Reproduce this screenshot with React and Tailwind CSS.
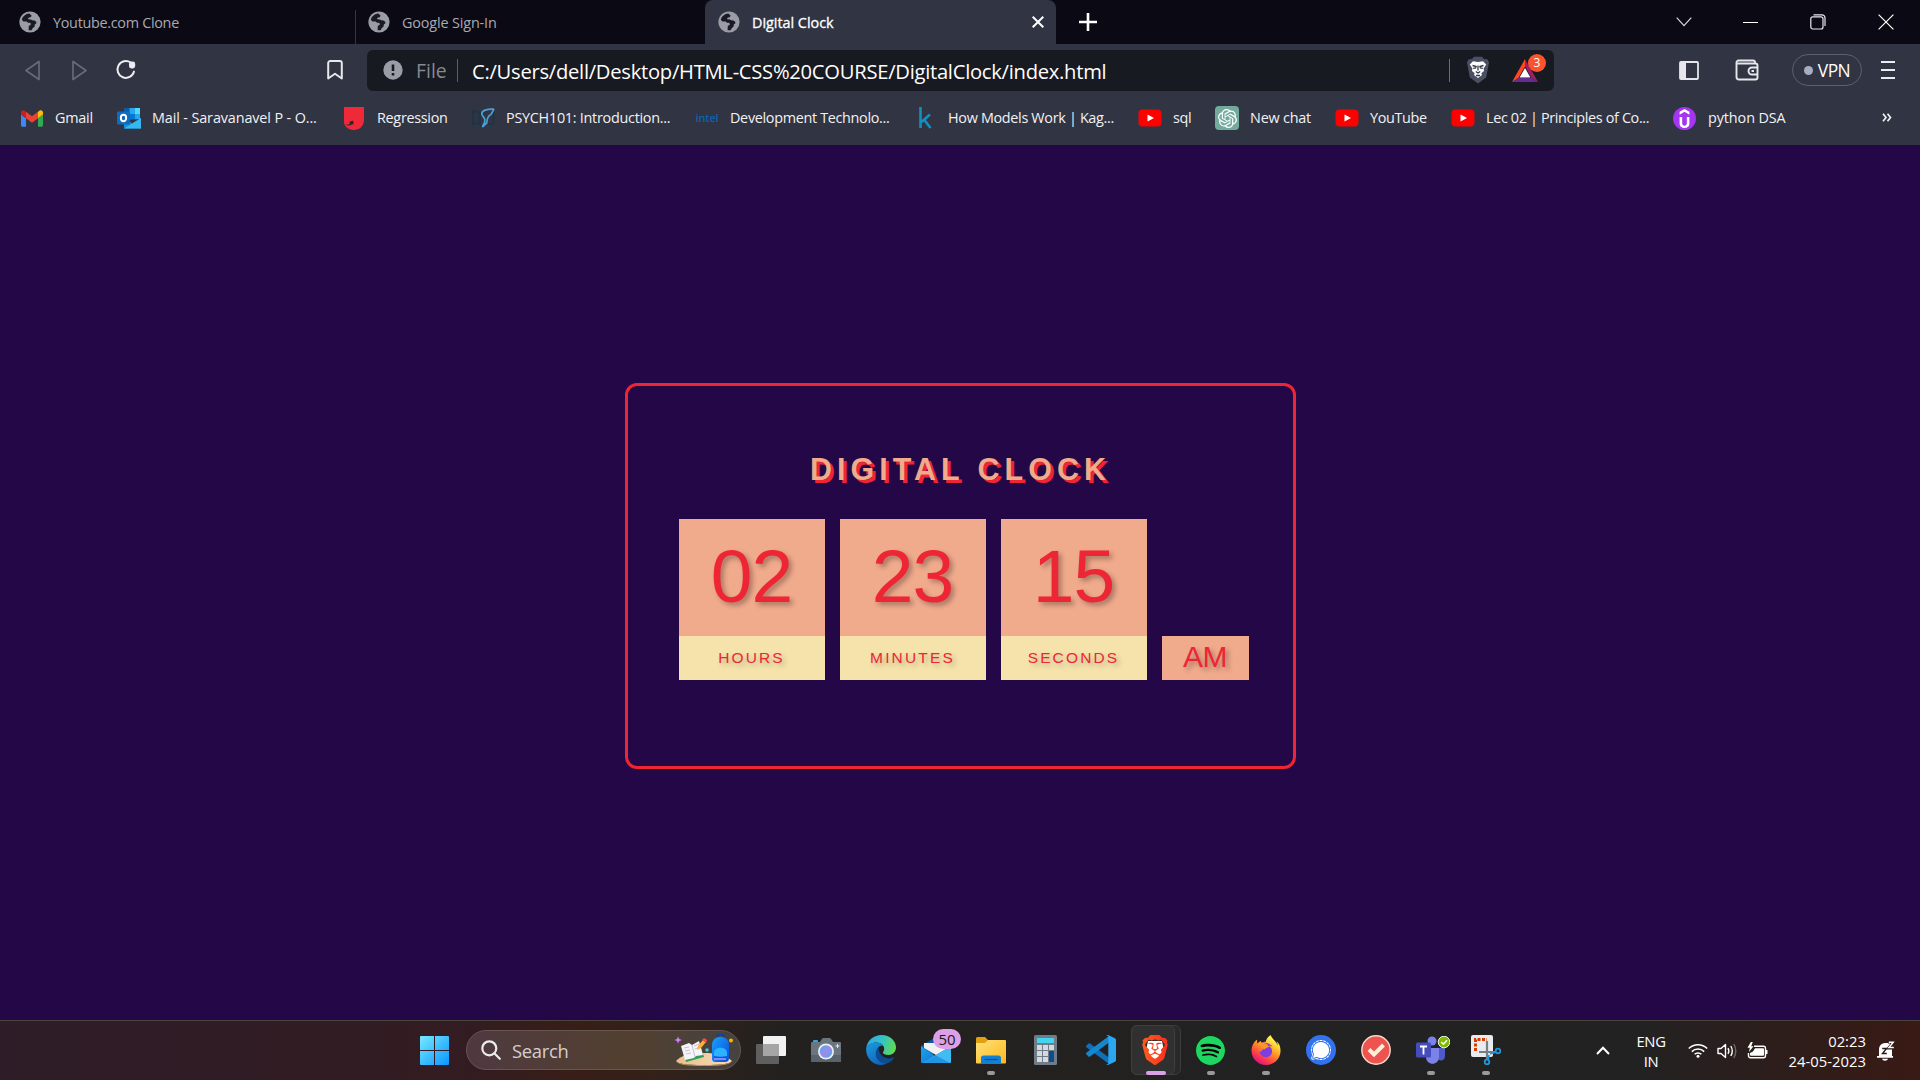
import { SiBrave, SiSpotify, SiFirefoxbrowser, SiSignal, SiUdemy, SiOpenai } from "react-icons/si";

/* ---------- browser chrome icons ---------- */

function Globe() {
  return (
    <svg viewBox="0 0 22 22" className="size-[22px] shrink-0">
      <circle cx="11" cy="11" r="10.6" fill="#9a9da8" />
      <path
        d="M10.3 2.6c-3.6.3-6.6 2.7-7.5 6.2l1.6 1.6 3.2.1 1.4 1.2h2.1l.8 1.2-.6 1.3-1.5.6-.2 4.4c.9.2 2.3.2 3.4-.1l.4-1.7 2.2-1.9.2-2.1 1.6-1.2-.2-1.5-1.7-1.2-2.4-.2-1.2-.9-2.5-.1-.4-1.1 1.2-.8 1.4-.2 1.1-1.4z"
        fill="#0c0b15"
        className="opacity-90"
      />
    </svg>
  );
}

function Reload() {
  return (
    <svg viewBox="0 0 22 22" className="size-[22px]" fill="none">
      <path d="M15.7 3.6A8.4 8.4 0 1 0 19 12.6" stroke="#ececf0" strokeWidth="2" strokeLinecap="round" />
      <rect x="14" y="2.6" width="6.2" height="6.8" rx="2.4" fill="#ececf0" />
    </svg>
  );
}

function BatTriangle() {
  return (
    <svg viewBox="0 0 26 23" className="h-[23px] w-[26px]">
      <path d="M13 0 0 23l6.500-4L13 7.500z" fill="#ff4724" />
      <path d="M13 0 26 23l-6.500-4L13 7.500z" fill="#9e1f63" />
      <path d="M0 23h26l-6.500-4h-13z" fill="#662d91" />
      <path d="M13 9 7.600 18.500h10.800z" fill="#fff" />
    </svg>
  );
}

function BraveShield() {
  return (
    <svg viewBox="0 0 24 28" className="h-[28px] w-6">
      <path d="M6 3 8 .8h8L18 3l3.300.2 1.700 3-.8 4.300-2 11L12 27.500 3.800 21.500l-2-11L1 6.200l1.700-3z" fill="#4b4f63" />
      <path
        d="M7 5.200 12 6l5-.8 3.200 3.200-2.600 4 .4 2.600-2.700 2.200L16 19l-4 3-4-3 .7-1.800L6 15l.4-2.600-2.600-4z"
        fill="#fff"
      />
      <path
        d="M6.500 9.500l3.600 1-.5 1.500-2.400.4M17.500 9.500l-3.600 1 .5 1.500 2.400.4M12 9.500v5M9.800 15.500l2.200 1.500 2.200-1.500M10 19.500h4"
        stroke="#33364a"
        strokeWidth="1.300"
        fill="none"
      />
    </svg>
  );
}

function Wallet() {
  return (
    <svg viewBox="0 0 24 22" className="h-[22px] w-6" fill="none" stroke="#e6e6ec" strokeWidth="1.900">
      <path d="M22.500 8V6.500a2 2 0 0 0-2-2H2.500M20 4.500V3.200A1.700 1.700 0 0 0 18.300 1.500H3.500A2 2 0 0 0 1.500 3.500V18a2.500 2.500 0 0 0 2.500 2.500h16.500a2 2 0 0 0 2-2V8" />
      <path d="M22.500 8.500H17a3.400 3.400 0 0 0 0 7h5.500M16.500 12h2.500" />
    </svg>
  );
}

/* ---------- bookmark icons ---------- */

function Gmail() {
  return (
    <svg viewBox="52 42 88 66" className="h-[17px] w-[22px]">
      <path fill="#4285f4" d="M58 108h14V74L52 59v43c0 3.320 2.690 6 6 6" />
      <path fill="#34a853" d="M120 108h14c3.320 0 6-2.690 6-6V59l-20 15" />
      <path fill="#fbbc04" d="M120 48v26l20-15v-8c0-7.420-8.470-11.650-14.400-7.200" />
      <path fill="#ea4335" d="M72 74V48l24 18 24-18v26L96 92" />
      <path fill="#c5221f" d="M52 51v8l20 15V48l-5.600-4.200c-5.940-4.450-14.400-.22-14.400 7.200" />
    </svg>
  );
}

function Outlook() {
  return (
    <svg viewBox="0 0 24 22" className="h-[22px] w-6">
      <path d="M7 1h16v12H7z" fill="#0a5ba8" />
      <path d="M12.500 1H18v6h-5.500z" fill="#28a8ea" />
      <path d="M18 1h5v6h-5z" fill="#50d9ff" />
      <path d="M12.500 7H18v5h-5.500z" fill="#0078d4" />
      <path d="M18 7h5v5h-5z" fill="#28a8ea" />
      <path d="M7 21.500V11l8.500 5.500L24 11v10.500z" fill="#1490df" />
      <path d="M7 21.500 24 11v10.500z" fill="#35b8f1" />
      <rect y="4.500" width="13" height="13" rx="1" fill="#0f6cbd" />
      <ellipse cx="6.500" cy="11" rx="2.700" ry="3.200" fill="none" stroke="#fff" strokeWidth="1.900" />
    </svg>
  );
}

function RegressionMark() {
  return (
    <svg viewBox="0 0 20 23" className="h-[23px] w-5">
      <path d="M0 0h20v13.500A9.500 9.500 0 0 1 10.500 23C5.500 23 1 20.500 0 16z" fill="#ef2938" />
      <path d="M1.500 17.500c3 .5 4.500-.4 5-1.800l-1.800-.6 4.500-1.300.3 4.200-1.200-.9c-1.400 1.500-4.800 1.900-6.800.4z" fill="#20222e" />
    </svg>
  );
}

function PsychMark() {
  return (
    <svg viewBox="0 0 23 20" className="h-5 w-[23px]" fill="none">
      <path d="M1.200 2.500v13.500l6-1 2 3M1.200 2.500l6.500 2v10M21.500 4v12h-5.500" stroke="#1d3447" strokeWidth="2" />
      <path d="M22 1.200C15 .8 9.500 2.500 9.800 6c.3 3 4.200 3.500 3 7.500-.6 2-1.500 3.500-2.500 5.500M22 1.200l-3 5.300c-3 1-4 5-4.300 8.500l-4.400 4" stroke="#4b9fd5" strokeWidth="1.700" />
    </svg>
  );
}

function YouTube() {
  return (
    <svg viewBox="0 0 24 18" className="h-[18px] w-6">
      <rect x=".5" y=".5" width="23" height="17" rx="4" fill="#f00" />
      <path d="m9.500 5.500 6.500 3.500-6.500 3.500z" fill="#fff" />
    </svg>
  );
}

function Kaggle() {
  return (
    <svg viewBox="0 0 14 22" className="h-[22px] w-3.5" fill="none" stroke="#158fc0" strokeWidth="2.600">
      <path d="M2.500 0v21M12 7.500 3.500 15M6 12.500l6.500 8.500" />
    </svg>
  );
}

function ChatGpt() {
  return (
    <span className="flex size-6 items-center justify-center rounded bg-[#74aa9c]">
      <SiOpenai className="size-[19px] text-white" />
    </span>
  );
}

function Udemy() {
  return (
    <span className="-ml-px flex size-[23px] items-center justify-center rounded-full bg-[#a435f0]">
      <SiUdemy className="size-[19px] text-white" />
    </span>
  );
}

/* ---------- taskbar icons ---------- */

function Start() {
  return (
    <svg viewBox="0 0 29 29" className="size-[29px]">
      <defs>
        <linearGradient id="start" x1="0" y1="0" x2="1" y2="1">
          <stop offset="0" stopColor="#75eaff" />
          <stop offset="1" stopColor="#0a95ff" />
        </linearGradient>
      </defs>
      <path d="M1 0h13v14H0V1a1 1 0 0 1 1-1zM15 0h13a1 1 0 0 1 1 1v13H15zM0 15h14v14H1a1 1 0 0 1-1-1zM15 15h14v13a1 1 0 0 1-1 1H15z" fill="url(#start)" />
    </svg>
  );
}

function StudyArt() {
  return (
    <svg viewBox="0 0 60 32" className="h-8 w-[60px]">
      <defs>
        <linearGradient id="bag" x1="0" y1="0" x2="1" y2="1">
          <stop offset="0" stopColor="#1aa0ff" />
          <stop offset="1" stopColor="#0a4fd6" />
        </linearGradient>
        <linearGradient id="sand" x1="0" y1="0" x2="1" y2="0">
          <stop offset="0" stopColor="#eabf8d" />
          <stop offset="1" stopColor="#f5dcb9" />
        </linearGradient>
      </defs>
      <path d="M2 27c5-6 16-8 28-8s22 2 28 8c-3 3-10 4-28 4S5 30 2 27z" fill="url(#sand)" />
      <path d="M2 27c3 3 10 4 28 4s25-1 28-4c-1 3-8 5-28 5S3 30 2 27z" fill="#c78f58" />
      <path d="m8 14 4 14 18-5-4-13z" fill="#2f9e58" />
      <path d="m7 12 8-3 3 2 7-4 4 14-7 1-2 2-9 2z" fill="#f6f4f8" />
      <path d="m18 11 3 12M10 14l5-1M11 17l5-1M12 20l5-1M20 12l5-2M21 15l5-2" stroke="#b9b4c8" strokeWidth=".8" />
      <path d="m23 16 1-4 5-6 3 2-5 6z" fill="#ffb02e" />
      <path d="m28 6 2-2 3 2-1 3z" fill="#f4504a" />
      <path d="M4 2.500 5.300 5 8 6 5.300 7 4 9.500 3 7 .3 6 3 5z" fill="#d57bff" />
      <circle cx="33" cy="16" r="1.800" fill="#3fd0d4" />
      <circle cx="57" cy="6.500" r="2" fill="#ffb100" />
      <path d="M43 4c0-5 7-5 7 0" stroke="#0a3fae" strokeWidth="1.600" fill="none" />
      <path d="M38 11c0-11 17-11 17 0v13c0 3-2 4-4 4h-9c-3 0-4-1-4-4z" fill="url(#bag)" />
      <path d="M40 19c0-7 13-7 13 0v5H40z" fill="#2bb3ff" />
      <path d="M40 22c4 1 9 1 13 0v4H40z" fill="#0c57e0" />
      <path d="M40 25h12" stroke="#c7a5ff" strokeWidth="1.300" />
    </svg>
  );
}

function TaskView() {
  return (
    <svg viewBox="0 0 30 28" className="h-7 w-[30px]">
      <rect x="7" width="23" height="20" rx="1" fill="#f2f2f2" />
      <rect y="8" width="23" height="20" rx="1" fill="#666" className="opacity-90" />
      <path d="M7 8h16v12H7z" fill="#a6a6a6" />
    </svg>
  );
}

function Camera() {
  return (
    <svg viewBox="0 0 30 24" className="h-6 w-[30px]">
      <rect x="2" y="2" width="5" height="4" rx="1" fill="#2ba5e8" />
      <path d="M1 4h8l2-3.200 1-.8h7l1 .8L22 4h7a1 1 0 0 1 1 1v18a1 1 0 0 1-1 1H1a1 1 0 0 1-1-1V5a1 1 0 0 1 1-1z" fill="#6b757e" />
      <path d="M0 17h30v6a1 1 0 0 1-1 1H1a1 1 0 0 1-1-1z" fill="#59636c" />
      <circle cx="15" cy="13.500" r="8" fill="#eceff2" />
      <defs>
        <linearGradient id="lens" x1="0" y1="0" x2="1" y2="1">
          <stop offset=".1" stopColor="#5aa6f0" />
          <stop offset=".5" stopColor="#a08ae8" />
          <stop offset="1" stopColor="#3fb0f0" />
        </linearGradient>
      </defs>
      <circle cx="15" cy="13.500" r="6.300" fill="url(#lens)" />
      <path d="M26.500 6v4M24.500 8h4" stroke="#e5e8ea" strokeWidth="1" />
    </svg>
  );
}

function Edge() {
  return (
    <svg viewBox="0 0 30 30" className="size-[30px]">
      <defs>
        <linearGradient id="edge-top" x1="0" y1=".4" x2="1" y2=".6">
          <stop offset="0" stopColor="#2fa7e6" />
          <stop offset=".5" stopColor="#35c3c5" />
          <stop offset="1" stopColor="#62dc4b" />
        </linearGradient>
        <linearGradient id="edge-left" x1="0" y1="0" x2=".6" y2="1">
          <stop offset="0" stopColor="#1b9de2" />
          <stop offset="1" stopColor="#0f62b8" />
        </linearGradient>
      </defs>
      <path d="M.2 13C1.500 5 8 0 15.500 0 24 0 30 6 30 12.500c0 4.500-3.500 7.500-7.500 7.500-3.500 0-5.500-1.200-5.500-2.500 0-1 1.200-1.500 1.200-3.800C18.200 10.500 15 7.500 10.500 7.500 5.500 7.500 1.500 10 .2 13z" fill="url(#edge-top)" />
      <path d="M.2 13C1.800 9.500 6 7.500 10.500 7.500c3 0 5.200 1.200 6.600 3-4 0-6.600 2.800-6.600 7 0 6.500 5.500 11.500 11.500 9.500-2 1.900-4.500 3-7 3C6.500 30-.8 22 .2 13z" fill="url(#edge-left)" />
      <path d="M12.500 12.600C7.500 17 9.500 26 17 28.300c5 1.200 9.500-2.300 10.800-5.300.3-.8-.3-1-1-.6-6 2.800-13.800-.4-14.300-9.800z" fill="#0c4c92" />
    </svg>
  );
}

function Mail() {
  return (
    <svg viewBox="0 0 30 26" className="h-[26px] w-[30px]">
      <defs>
        <linearGradient id="mail" x1="0" y1="0" x2="1" y2="1">
          <stop offset="0" stopColor="#1aa4ea" />
          <stop offset="1" stopColor="#1272d2" />
        </linearGradient>
      </defs>
      <path d="M0 9 13 1a3 3 0 0 1 4 0l13 8v8H0z" fill="#0c57a5" />
      <path d="M3 6h24v5L15 18 3 11z" fill="#f1f1f4" />
      <path d="M0 9l20 14v3H1a1 1 0 0 1-1-1z" fill="url(#mail)" />
      <path d="M30 9v16a1 1 0 0 1-1 1H1.500z" fill="#3fbdf3" />
      <path d="M1.500 26 15 18.500 29 26z" fill="#1583db" className="opacity-70" />
    </svg>
  );
}

function Explorer() {
  return (
    <svg viewBox="0 0 30 27" className="h-[27px] w-[30px]">
      <defs>
        <linearGradient id="folder" x1="0" y1="0" x2="1" y2="1">
          <stop offset="0" stopColor="#ffe07a" />
          <stop offset="1" stopColor="#fcb91a" />
        </linearGradient>
      </defs>
      <path d="M0 1.500A1.500 1.500 0 0 1 1.500 0H9l3 3h7v6H0z" fill="#e0a010" />
      <path d="M0 6h9l3-3h17a1 1 0 0 1 1 1v21.500a1 1 0 0 1-1 1H1a1 1 0 0 1-1-1z" fill="url(#folder)" />
      <path d="M5 27v-6a2.500 2.500 0 0 1 2.500-2.500h15A2.500 2.500 0 0 1 25 21v6z" fill="#1180d4" />
      <path d="M8.500 22.500h13" stroke="#0a4e92" strokeWidth="1.200" />
    </svg>
  );
}

function Calculator() {
  return (
    <svg viewBox="0 0 23 30" className="h-[30px] w-[23px]">
      <rect width="23" height="30" rx="1.500" fill="#717c86" />
      <rect x="3" y="3" width="17" height="5" rx=".5" fill="#42d4f0" />
      <path d="M3 10h5v5H3zM9 10h5v5H9zM15 10h5v5h-5zM3 16h5v5H3zM9 16h5v5H9zM3 22h5v5H3zM9 22h5v5H9z" fill="#d3dadf" />
      <path d="M15 16h5v11h-5z" fill="#0c4c92" />
    </svg>
  );
}

function VsCode() {
  return (
    <svg viewBox="0 0 30 30" className="size-[30px]">
      <path d="M.6 10.500 2.300 8.600a1.300 1.300 0 0 1 1.700 0L23 22.500V29L.6 12.400a1.200 1.200 0 0 1 0-1.900z" fill="#0f6fb8" />
      <path d="M.6 19.500 2.300 21.400a1.300 1.300 0 0 0 1.700 0L23 7.500V1L.6 17.600a1.200 1.200 0 0 0 0 1.900z" fill="#1687cf" />
      <path d="m22 0 7 3.200a2 2 0 0 1 1 1.600v20.400a2 2 0 0 1-1 1.600L22 30c-.8 0-1.500-.4-2-1 1 .6 2.300.1 2.300-1.300V2.300C22.300.9 21 .4 20 1c.5-.6 1.200-1 2-1z" fill="#2ba6ef" />
    </svg>
  );
}

function BraveLion() {
  return (
    <svg viewBox="0 0 30 30" className="size-[30px]">
      <defs>
        <linearGradient id="brave" x1="0" y1="0" x2="1" y2="0">
          <stop offset="0" stopColor="#ff5b1f" />
          <stop offset="1" stopColor="#f8301c" />
        </linearGradient>
      </defs>
      <path d="M8 6h14l2 10-9 10-9-10z" fill="#fff" />
      <SiBrave x="0" y="0" size={30} fill="url(#brave)" />
    </svg>
  );
}

function Spotify() {
  return (
    <span className="flex size-[29px] rounded-full bg-black">
      <SiSpotify className="size-[29px] text-[#1ed760]" />
    </span>
  );
}

function Firefox() {
  return (
    <svg viewBox="0 0 30 30" className="size-[30px]">
      <defs>
        <linearGradient id="fox" gradientUnits="userSpaceOnUse" x1="19" y1="2" x2="6" y2="22">
          <stop offset=".1" stopColor="#fff04a" />
          <stop offset=".45" stopColor="#ff9a26" />
          <stop offset=".8" stopColor="#ff3b47" />
          <stop offset="1" stopColor="#e31587" />
        </linearGradient>
      </defs>
      <circle cx="14.500" cy="15.500" r="9" fill="#7d3fe0" />
      <path d="M7 8c3-2 6 0 9 1l2 3-6 2-3 3z" fill="#ff9420" />
      <SiFirefoxbrowser x="0" y="0" size={30} fill="url(#fox)" />
    </svg>
  );
}

function Signal() {
  return (
    <span className="flex size-[30px] items-center justify-center rounded-full bg-[#3372ee]">
      <SiSignal className="size-5 text-white" />
    </span>
  );
}

function Todo() {
  return (
    <svg viewBox="0 0 30 30" className="size-[30px]">
      <circle cx="15" cy="15" r="14.200" fill="#ef5350" stroke="#f6dccb" strokeWidth="1.400" />
      <path d="m8 14.500 5 5 9.500-9.500" stroke="#fff0da" strokeWidth="4" fill="none" />
    </svg>
  );
}

function Teams() {
  return (
    <svg viewBox="0 0 34 28" className="ml-1 h-7 w-[34px]">
      <circle cx="16" cy="5" r="4.500" fill="#7b83eb" />
      <path d="M21 12h8v8c0 6-8 6-8 0z" fill="#5059c9" />
      <path d="M10 12h13v9c0 9-13 9-13 0z" fill="#7b83eb" />
      <rect y="6.500" width="15" height="15" rx="1.500" fill="#444dbb" />
      <path d="M4 10.500h7M7.500 10.500v8" stroke="#fff" strokeWidth="1.800" />
      <circle cx="28" cy="6" r="5.800" fill="#7fba00" stroke="#f3f8e8" strokeWidth="1" />
      <path d="m25.200 6 2.200 2.200 3.600-4" stroke="#fff" strokeWidth="1.500" fill="none" />
    </svg>
  );
}

function Snip() {
  return (
    <svg viewBox="0 0 30 30" className="size-[30px]">
      <rect width="22" height="22" rx="2" fill="#e8ecef" />
      <path d="M4.500 16V4.500H16" stroke="#d83b01" strokeWidth="3" strokeDasharray="3 1.500" fill="none" />
      <path d="M16 6v18M8 17h17" stroke="#767f88" strokeWidth="2.200" />
      <circle cx="27" cy="16" r="2.300" fill="none" stroke="#1c9be0" strokeWidth="1.800" />
      <circle cx="16" cy="27" r="2.300" fill="none" stroke="#1c9be0" strokeWidth="1.800" />
      <path d="m19 19 6-2M18 20l-1 5" stroke="#1c9be0" strokeWidth="1.800" />
    </svg>
  );
}

/* ---------- sections ---------- */

const bookmarks = [
  { label: "Gmail", icon: <Gmail />, w: "w-[97px]", t: "tracking-[-0.25px]" },
  { label: "Mail - Saravanavel P - O...", icon: <Outlook />, w: "w-[225px]", t: "tracking-[-0.12px]" },
  { label: "Regression", icon: <RegressionMark />, w: "w-[129px]", t: "tracking-[-0.3px]" },
  { label: "PSYCH101: Introduction...", icon: <PsychMark />, w: "w-[224px]", t: "tracking-[-0.27px]" },
  {
    label: "Development Technolo...",
    icon: <span className="text-[11px] font-semibold tracking-[-0.2px] text-[#0b62b0]">intel</span>,
    w: "w-[218px]",
    t: "tracking-[-0.32px]",
  },
  { label: "How Models Work | Kag...", icon: <Kaggle />, w: "w-[225px]", t: "tracking-[-0.32px]" },
  { label: "sql", icon: <YouTube />, w: "w-[77px]", t: "tracking-[-0.3px]" },
  { label: "New chat", icon: <ChatGpt />, w: "w-[120px]", t: "tracking-[-0.2px]" },
  { label: "YouTube", icon: <YouTube />, w: "w-[116px]", t: "tracking-[-0.35px]" },
  { label: "Lec 02 | Principles of Co...", icon: <YouTube />, w: "w-[222px]", t: "tracking-[-0.35px]" },
  { label: "python DSA", icon: <Udemy />, w: "w-[203px]", t: "tracking-[-0.1px]" },
];

function TabStrip() {
  return (
    <div className="flex h-11 bg-[#0b0a14] text-[14.4px] tracking-[-0.3px] text-[#a9a9b2]">
      <div className="flex w-[355px] items-center gap-3 pl-[19px]">
        <Globe />
        <span className="pt-px">Youtube.com Clone</span>
      </div>
      <div className="mt-2.5 flex w-[350px] items-center gap-3 border-l border-[#34353f] pb-2.5 pl-3">
        <Globe />
        <span className="pt-px tracking-[-0.15px]">Google Sign-In</span>
      </div>
      <div className="flex w-[351px] items-center gap-3 rounded-t-lg bg-[#313442] pr-[12px] pl-[13px] text-white">
        <Globe />
        <span className="grow pt-px tracking-[-0.02px] [-webkit-text-stroke:0.3px_#fff]">Digital Clock</span>
        <svg viewBox="0 0 12 12" className="size-3" stroke="#fff" strokeWidth="2">
          <path d="M.7.7l10.600 10.600M11.300.7.7 11.300" />
        </svg>
      </div>
      <div className="flex grow items-center pl-[23px]">
        <svg viewBox="0 0 18 18" className="size-[18px]" stroke="#fff" strokeWidth="2.600">
          <path d="M9 0v18M0 9h18" />
        </svg>
      </div>
      <div className="flex items-center pr-[26px]">
        <svg viewBox="0 0 16 10" className="mr-[51px] h-2.5 w-4" fill="none" stroke="#d8d8dc" strokeWidth="1.200">
          <path d="m.7.7 7.300 8 7.300-8" />
        </svg>
        <div className="mr-[52px] h-px w-[15px] bg-white" />
        <svg viewBox="0 0 16 16" className="mr-[52px] size-4" fill="none" stroke="#e8e8ec" strokeWidth="1.200">
          <rect x=".8" y="2.800" width="12.200" height="12.200" rx="2" />
          <path d="M3.500.8H12a3 3 0 0 1 3 3V12" />
        </svg>
        <svg viewBox="0 0 16 16" className="size-4" stroke="#fff" strokeWidth="1.200">
          <path d="m.6.6 14.800 14.800M15.400.6.6 15.400" />
        </svg>
      </div>
    </div>
  );
}

function Toolbar() {
  return (
    <div className="flex h-[52px] items-center bg-[#313442] pl-6">
      <svg viewBox="0 0 16 21" className="mr-[31px] h-[21px] w-4" fill="none" stroke="#676a77" strokeWidth="1.700" strokeLinejoin="round">
        <path d="M15 1.500v18L2 10.500z" />
      </svg>
      <svg viewBox="0 0 16 21" className="mr-7 h-[21px] w-4" fill="none" stroke="#676a77" strokeWidth="1.700" strokeLinejoin="round">
        <path d="M2 1.500v18l13-9z" />
      </svg>
      <Reload />
      <svg viewBox="0 0 16 20" className="mr-6 ml-[190px] h-5 w-4" fill="none" stroke="#e8e8ec" strokeWidth="2" strokeLinejoin="round">
        <path d="M1.200 3a2 2 0 0 1 2-2h9.600a2 2 0 0 1 2 2v15.500L8 13.800l-6.800 4.700z" />
      </svg>
      <div className="flex h-[41px] w-[1187px] items-center rounded-md bg-[#181a21] pl-4">
        <svg viewBox="0 0 20 20" className="size-5">
          <circle cx="10" cy="10" r="9.700" fill="#9a9da8" />
          <path d="M10 4.500v6.500M10 13v2.500" stroke="#181a21" strokeWidth="2.600" />
        </svg>
        <span className="w-[41px] pt-0.5 pl-[13px] text-[19.4px] text-[#868892]">File</span>
        <div className="mr-3.5 ml-[13px] h-[23px] w-px bg-[#5d5f68]" />
        <span className="grow pt-0.5 text-[20.2px] tracking-[-0.27px] text-white">
          C:/Users/dell/Desktop/HTML-CSS%20COURSE/DigitalClock/index.html
        </span>
        <div className="mr-4 h-[23px] w-px bg-[#6b6d76]" />
        <BraveShield />
        <div className="relative mr-[16px] ml-[22px]">
          <BatTriangle />
          <span className="absolute -top-[5px] left-4 flex size-[18px] items-center justify-center rounded-full bg-[#fb542b] text-[12px] text-white">
            3
          </span>
        </div>
      </div>
      <svg viewBox="0 0 20 19" className="ml-[125px] h-[19px] w-5">
        <rect x="1" y="1" width="18" height="17" rx="1" fill="none" stroke="#e6e6ec" strokeWidth="1.800" />
        <path d="M1 1h6v17H1z" fill="#e6e6ec" />
      </svg>
      <div className="ml-9">
        <Wallet />
      </div>
      <div className="ml-[33px] flex h-8 w-[70px] items-center justify-center rounded-full border border-[#5c5f74] text-[17.4px] tracking-[-0.55px] text-white">
        <span className="mr-[5px] size-[9px] rounded-full bg-[#a9adc0]" />
        VPN
      </div>
      <div className="ml-[19px] flex w-3.5 flex-col gap-[6px]">
        <div className="h-0.5 bg-[#ececf0]" />
        <div className="h-0.5 bg-[#ececf0]" />
        <div className="h-0.5 bg-[#ececf0]" />
      </div>
    </div>
  );
}

function BookmarkBar() {
  return (
    <div className="flex h-[49px] bg-[#313442] pb-[5px] pl-5 text-[14.4px] whitespace-nowrap text-[#f1f1f4]">
      {bookmarks.map((b) => (
        <div key={b.label} className={"flex shrink-0 items-center gap-[11px] " + b.w}>
          <span className="flex w-6 shrink-0 items-center justify-center">{b.icon}</span>
          <span className={b.t}>{b.label}</span>
        </div>
      ))}
      <svg viewBox="0 0 10 9" className="mt-[17px] ml-1.5 h-[9px] w-2.5" fill="none" stroke="#f1f1f4" strokeWidth="1.700">
        <path d="m1 .8 3 3.700-3 3.700M5.500.8l3 3.700-3 3.700" />
      </svg>
    </div>
  );
}

const units = [
  { value: "02", label: "HOURS" },
  { value: "23", label: "MINUTES" },
  { value: "15", label: "SECONDS" },
];

function ClockPage() {
  return (
    <main className="flex flex-1 flex-col items-center bg-[#240747] pt-[238px] font-['Liberation_Sans',Arial,sans-serif]">
      <section className="flex h-[386px] w-[671px] flex-col rounded-xl border-[3px] border-[#ee2535]">
        <h2 className="mt-[66px] ml-[1px] text-center text-[30.5px] leading-[34px] font-bold tracking-[5px] text-[#f0aa8c] [text-shadow:3px_3px_0_#ee2535]">
          DIGITAL CLOCK
        </h2>
        <div className="mt-[33px] ml-[51px] flex items-end gap-[15px] text-[#ee2535]">
          {units.map((u) => (
            <div key={u.label} className="w-[146px] text-center">
              <div className="flex h-[117px] items-center justify-center bg-[#f0aa8c] pb-0.5 text-[75px] leading-none tracking-[-1px] [text-shadow:3px_3px_5px_rgba(0,0,0,0.3)]">
                {u.value}
              </div>
              <div className="flex h-11 items-center justify-center bg-[#f5e3ab] text-[15.5px] tracking-[2.15px] [text-shadow:3px_3px_5px_rgba(0,0,0,0.25)]">
                {u.label}
              </div>
            </div>
          ))}
          <div className="flex h-11 w-[87px] items-center justify-center bg-[#f0aa8c] pb-0.5 text-[30px] leading-none tracking-[-0.5px] [text-shadow:3px_3px_5px_rgba(0,0,0,0.3)]">
            AM
          </div>
        </div>
      </section>
    </main>
  );
}

const apps = [
  { name: "taskview", icon: <TaskView /> },
  { name: "camera", icon: <Camera /> },
  { name: "edge", icon: <Edge /> },
  { name: "mail", icon: <Mail />, badge: "50" },
  { name: "explorer", icon: <Explorer />, open: true },
  { name: "calculator", icon: <Calculator /> },
  { name: "vscode", icon: <VsCode /> },
  { name: "brave", icon: <BraveLion />, active: true },
  { name: "spotify", icon: <Spotify />, open: true },
  { name: "firefox", icon: <Firefox />, open: true },
  { name: "signal", icon: <Signal /> },
  { name: "todo", icon: <Todo /> },
  { name: "teams", icon: <Teams />, open: true },
  { name: "snip", icon: <Snip />, open: true },
];

function AppButton({ app }) {
  return (
    <div className="relative flex h-[59px] w-[55px] shrink-0 items-center justify-center pb-px">
      {app.active && (
        <>
          <div className="absolute top-1 left-[3px] h-[50px] w-[50px] rounded-md border border-[#3c3c3c] bg-[#292929]" />
          <div className="absolute top-1 left-[3px] h-[50px] w-11 rounded-md border border-[#3f3f3f] bg-[#303030]" />
        </>
      )}
      <div className={app.active ? "relative pr-0.5" : "relative"}>{app.icon}</div>
      {app.badge && (
        <span className="absolute top-2 left-[25px] flex h-5 w-7 items-center justify-center rounded-full bg-[#dd9fe6] text-[15px] text-[#1a1a1a]">
          {app.badge}
        </span>
      )}
      {app.open && <span className="absolute bottom-[5px] left-6 h-1 w-2 rounded-full bg-[#9a9a9a]" />}
      {app.active && <span className="absolute bottom-[5px] left-[18px] h-1 w-5 rounded-full bg-[#dd9fe6]" />}
    </div>
  );
}

function Tray() {
  return (
    <div className="flex items-center text-[14.8px] leading-5 text-white">
      <svg viewBox="0 0 14 9" className="mr-[26px] h-[9px] w-3.5" fill="none" stroke="#fff" strokeWidth="2">
        <path d="m1 8 6-6.300L13 8" />
      </svg>
      <div className="mr-[22px] w-[30px] text-center tracking-[-0.3px]">
        ENG
        <br />
        IN
      </div>
      <svg viewBox="0 0 20 15" className="mr-[9px] h-[15px] w-5" fill="none" stroke="#fff" strokeWidth="1.500">
        <path d="M.8 5.500a13 13 0 0 1 18.400 0M3.800 8.600a8.800 8.800 0 0 1 12.400 0M6.600 11.300a4.800 4.800 0 0 1 6.800 0" />
        <circle cx="10" cy="13.200" r="1.500" fill="#fff" stroke="none" />
      </svg>
      <svg viewBox="0 0 21 18" className="mr-[9px] h-[18px] w-[21px]" fill="none" stroke="#fff" strokeWidth="1.400">
        <path d="M1 6.500h3L8.500 2.500v13L4 11.500H1z" strokeLinejoin="round" />
        <path d="M11 6.200q1.700 2.800 0 5.600M13.800 4q3 5 0 10" />
        <path d="M16.800 2q4 7 0 14" stroke="#6a6a6a" />
      </svg>
      <svg viewBox="0 0 21 17" className="mr-[15px] h-[17px] w-[21px]">
        <path d="M7 4.200h9.500a2 2 0 0 1 2 2v7.600a2 2 0 0 1-2 2h-13a2 2 0 0 1-2-2V11" fill="none" stroke="#fff" strokeWidth="1.400" />
        <path d="M8 6.200h8a1 1 0 0 1 1 1v5.600a1 1 0 0 1-1 1H4a1 1 0 0 1-1-1V11l3-1.500zM19 8h1.500v4H19z" fill="#fff" />
        <path d="M3.800 0 .5 5.800h2.300L2 10l4.500-5.800H4.200L5.800 0z" fill="#fff" />
      </svg>
      <div className="w-[83px] text-right tracking-[0.02px] whitespace-nowrap">
        02:23
        <br />
        24-05-2023
      </div>
      <svg viewBox="0 0 18 20" className="mr-[25px] ml-[11px] h-5 w-[18px]">
        <path d="M2 16V8a6 6 0 0 1 6-6h5v5h2v9zM0 15h16v1.800H0z" fill="#fff" />
        <path d="M5 17.800h6c-.3 2.600-5.700 2.600-6 0z" fill="#fff" />
        <path d="M5.200 7.500H9.500l-4 5h4.300" stroke="#2b1a18" strokeWidth="1.400" fill="none" />
        <path d="M11 1h5.500L11.800 7H17" stroke="#2b1a18" strokeWidth="3" fill="none" />
        <path d="M11.800 1.200h4.400L12 6.500h4.800" stroke="#fff" strokeWidth="1.500" fill="none" />
      </svg>
    </div>
  );
}

function Taskbar() {
  return (
    <footer className="flex h-[60px] items-center border-t border-[#4a4440] bg-[linear-gradient(90deg,#2e1c28_0%,#331c22_24%,#371e16_30%,#33211a_34%,#222120_41%,#222_85%,#2d1d1b_93%,#3a1a14_100%)]">
      <div className="flex pl-[420px]">
        <Start />
      </div>
      <div className="mb-px ml-[17px] flex h-10 w-[275px] shrink-0 items-center rounded-full border border-[#675551] bg-[linear-gradient(90deg,#4f3940,#52402f_60%,#454341)] pl-3.5 text-[18.4px] tracking-[-0.3px] text-[#d6cfcf]">
        <svg viewBox="0 0 20 20" className="mr-[11px] size-5 shrink-0" fill="none" stroke="#ececec" strokeWidth="2.200">
          <circle cx="8.300" cy="8.300" r="7" />
          <path d="m13.300 13.300 5.500 5.500" strokeLinecap="round" />
        </svg>
        <span className="grow pt-0.5">Search</span>
        <div className="mr-[6px]">
          <StudyArt />
        </div>
      </div>
      <div className="ml-[2px] flex">
        {apps.map((app) => (
          <AppButton key={app.name} app={app} />
        ))}
      </div>
      <div className="grow" />
      <Tray />
    </footer>
  );
}

export default function App() {
  return (
    <div className="flex h-[1080px] w-[1920px] flex-col overflow-hidden font-['Open_Sans','Noto_Sans',sans-serif]">
      <TabStrip />
      <Toolbar />
      <BookmarkBar />
      <ClockPage />
      <Taskbar />
    </div>
  );
}
